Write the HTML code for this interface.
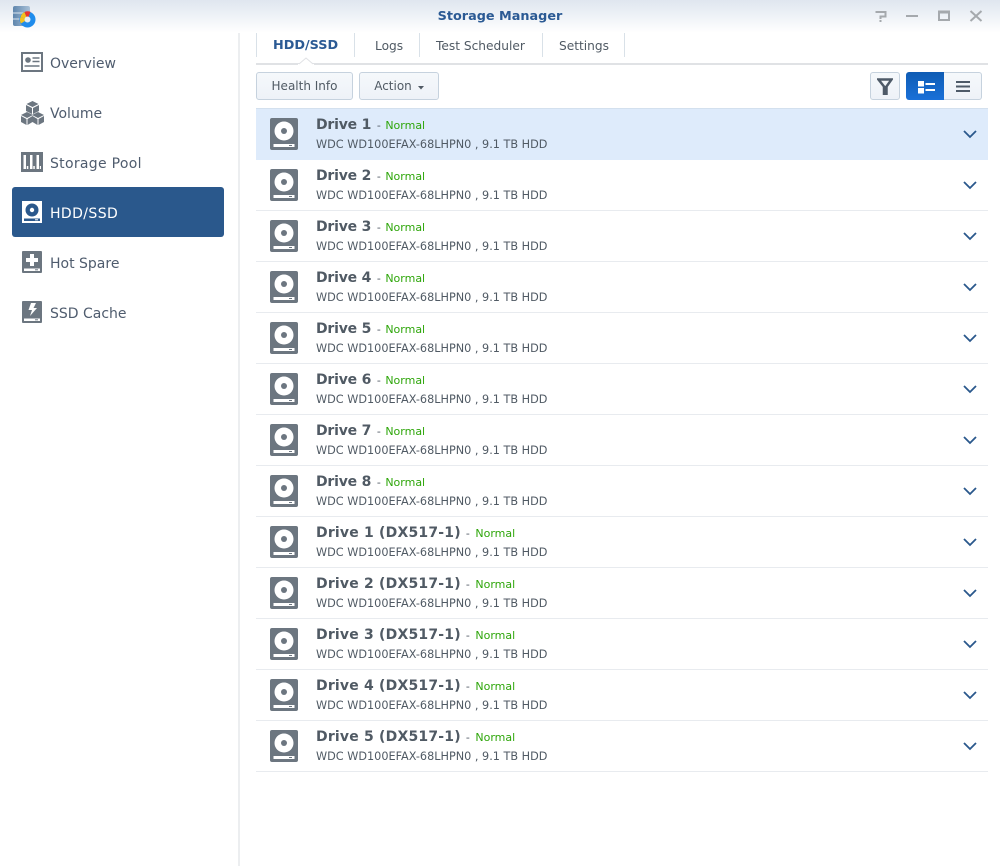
<!DOCTYPE html>
<html><head><meta charset="utf-8"><style>
html,body{margin:0;padding:0}
body{width:1000px;height:866px;position:relative;overflow:hidden;background:#fff;font-family:"DejaVu Sans","Liberation Sans",sans-serif;color:#505a64}
.a{position:absolute;white-space:nowrap}
.top{left:0;top:0;width:1000px;height:33px;background:linear-gradient(#dfe6ef,#fff)}
.side{left:238px;top:33px;width:2px;height:833px;background:#eceef0}
.nav{left:50px;font-size:14px;line-height:20px;color:#4f5c6e}
.sel{left:12px;top:187px;width:212px;height:50px;background:#2a588c;border-radius:3px}
.tab{top:33px;height:24px;width:1px;background:#d9e1e8}
.tt{top:37px;font-size:12.2px;line-height:18px;color:#505a64}
.btn{box-sizing:border-box;top:72px;height:28px;border:1px solid #c6d2de;border-radius:3px;background:linear-gradient(#f5f8fb,#eef2f8);font-size:12px;line-height:27px;color:#505a64;text-align:center}
.row{left:256px;width:732px;height:51px;box-sizing:border-box;border-bottom:1px solid #e8ebef}
.row svg{position:absolute}
.ic{left:14px;top:9px}
.ch{left:707px;top:21px}
.n{position:absolute;left:60px;top:6px;font-size:14px;line-height:20px;font-weight:bold;color:#505a64;white-space:nowrap;letter-spacing:-.2px}
.l{letter-spacing:.2px}
.n span{font-weight:normal;font-size:11px;color:#505a64;letter-spacing:0;margin-left:1px;margin-right:1px}
.n.l span{margin-left:0;margin-right:2px}
.n b{font-weight:normal;font-size:11px;color:#2ea60a;letter-spacing:0}
.d{position:absolute;left:60px;top:27px;font-size:11.25px;line-height:17px;color:#505a64;white-space:nowrap}
</style></head><body>
<div class="a top"></div>
<div class="a side"></div>

<svg class="a" style="left:12px;top:5px" width="26" height="24" viewBox="0 0 26 24"><defs><linearGradient id="lg" x1="0" x2="1" y1="0" y2="0"><stop offset="0" stop-color="#5f86ad"/><stop offset="1" stop-color="#a9c1d8"/></linearGradient></defs><rect x="1" y="1" width="17" height="20" rx="2" fill="url(#lg)"/><path d="M1 8h17M1 14h17" stroke="#dce6ef" stroke-width="1"/><circle cx="15.500" cy="14.500" r="8" fill="#1f8cec"/><path d="M15.500 14.500L8.500 12a8 8 0 0 1 4-5z" fill="#f3c01d"/><path d="M15.500 14.500L12.500 7a8 8 0 0 1 6-.2z" fill="#e8352e"/><path d="M15.500 14.500L8.500 12a8 8 0 0 0 .4 6.500z" fill="#f3c01d"/><circle cx="15.500" cy="14.500" r="3" fill="#e4edf5"/></svg>
<div class="a" style="left:300px;width:400px;top:9px;text-align:center;font-size:12.800px;line-height:16px;font-weight:bold;color:#2b5a94">Storage Manager</div>
<svg class="a" style="left:870px;top:8px" width="115" height="16" viewBox="0 0 115 16" fill="none" stroke="#a5a9ad"><path d="M5.500 4h10v4.500h-5V11M10.500 12v2" stroke-width="2"/><path d="M36 8h12" stroke-width="2"/><rect x="69" y="4" width="10" height="8" stroke-width="2"/><path d="M68 4h12" stroke-width="3"/><path d="M100.500 3l11 10M111.500 3l-11 10" stroke-width="2"/></svg>

<svg class="a" style="left:21px;top:52px" width="22" height="20" viewBox="0 0 22 20"><rect width="22" height="20" fill="#6c7680"/><rect x="2" y="2" width="18" height="16" fill="#fff"/><circle cx="7" cy="8" r="2.800" fill="#6c7680"/><path d="M11.500 6h7M11.500 9.500h7M3.500 14h15" stroke="#6c7680" stroke-width="1.500"/></svg>
<div class="a nav" style="top:54px">Overview</div>
<svg class="a" style="left:21px;top:101px" width="23" height="24" viewBox="0 0 23 24" fill="#6c7680"><path d="M11.500 0l6 3-6 3-6-3z"/><path d="M5 4l6 3v6l-6-3zM18 4l-6 3v6l6-3z"/><path d="M6 11l6 3-6 3-6-3z"/><path d="M0 15l5.500 3v6L0 21zM11.500 15L6.500 18v6l5-3z"/><path d="M17 11l6 3-6 3-6-3z"/><path d="M11.500 15l5 3v6l-5-3zM23 15l-5.500 3v6l5.500-3z"/></svg>
<div class="a nav" style="top:104px">Volume</div>
<svg class="a" style="left:21px;top:152px" width="22" height="20" viewBox="0 0 22 20"><rect width="22" height="20" fill="#6c7680"/><path d="M2.500 3h2.500v14H2.500zM9 3h2.500v14H9zM15.500 3h2.500v14h-2.500z" fill="#fff"/><path d="M5.800 14h1.500v3H5.800zM12.300 14h1.500v3h-1.500zM18.800 14h1.200v3h-1.200z" fill="#fff"/></svg>
<div class="a nav" style="top:154px;letter-spacing:.3px">Storage Pool</div>
<div class="a sel"></div>
<svg class="a" style="left:22px;top:201px" width="20" height="22" viewBox="0 0 20 22"><rect width="20" height="22" fill="#fff"/><circle cx="10" cy="9" r="6.500" fill="#2a588c"/><circle cx="10" cy="9" r="2.200" fill="#fff"/><rect x="2" y="17.500" width="16" height="2.500" fill="#2a588c"/><rect x="13" y="18.300" width="3" height="1" fill="#fff"/></svg>
<div class="a nav" style="top:204px;color:#fff;letter-spacing:.4px">HDD/SSD</div>
<svg class="a" style="left:22px;top:251px" width="20" height="22" viewBox="0 0 20 22"><rect width="20" height="22" rx="1" fill="#6c7680"/><path d="M8 3h4v4h4v4h-4v4H8v-4H4V7h4z" fill="#fff"/><rect x="2" y="17.500" width="16" height="2.500" fill="#fff"/><rect x="13" y="18.300" width="3" height="1" fill="#6c7680"/></svg>
<div class="a nav" style="top:254px">Hot Spare</div>
<svg class="a" style="left:22px;top:301px" width="20" height="22" viewBox="0 0 20 22"><rect width="20" height="22" rx="1" fill="#6c7680"/><path d="M9 2h5l-2.500 5H15l-7 8 2-6H6.500z" fill="#fff"/><rect x="2" y="17.500" width="16" height="2.500" fill="#fff"/><rect x="13" y="18.300" width="3" height="1" fill="#6c7680"/></svg>
<div class="a nav" style="top:304px">SSD Cache</div>

<div class="a tab" style="left:256px"></div><div class="a tab" style="left:354px"></div><div class="a tab" style="left:419px"></div><div class="a tab" style="left:542px"></div><div class="a tab" style="left:624px"></div>
<div class="a tt" style="left:273px;font-weight:bold;color:#2b5a94;font-size:12.800px">HDD/SSD</div>
<div class="a tt" style="left:375px">Logs</div>
<div class="a tt" style="left:436px">Test Scheduler</div>
<div class="a tt" style="left:559px">Settings</div>
<div class="a" style="left:256px;top:63px;width:732px;height:2px;background:#e0e2e5"></div>
<svg class="a" style="left:298px;top:57px" width="16" height="8" viewBox="0 0 16 8"><path d="M0 7h1l7-6 7 6h1v1H0z" fill="#fff"/><path d="M1 7l7-6 7 6" fill="none" stroke="#e0e2e5"/></svg>

<div class="a btn" style="left:256px;width:97px">Health Info</div>
<div class="a btn" style="left:359px;width:80px;padding-right:12px">Action</div>
<svg class="a" style="left:417px;top:86px" width="8" height="4"><path d="M1 0h6L4 3.500z" fill="#505a64"/></svg>
<div class="a btn" style="left:870px;width:30px"></div>
<svg class="a" style="left:877px;top:78px" width="16" height="17" viewBox="0 0 16 17"><path d="M1.500 1.500h13L9.500 8.500V16H7V8.500z" fill="none" stroke="#4e5a68" stroke-width="2.500"/><path d="M7 9h2.500v7H7z" fill="#4e5a68"/></svg>
<div class="a" style="left:906px;top:72px;width:38px;height:28px;background:linear-gradient(#0f5cb4,#1a70d8);border-radius:3px 0 0 3px"></div>
<svg class="a" style="left:917px;top:80px" width="18" height="14"><path d="M1 1h6v5.500H1zM1 8h6v5.500H1zM8.500 3H18v2H8.500zM8.500 9H18v2H8.500z" fill="#fff"/></svg>
<div class="a btn" style="left:944px;width:38px;border-left:0;border-radius:0 3px 3px 0"></div>
<svg class="a" style="left:956px;top:81px" width="14" height="11"><path d="M0 0h14v2H0zM0 4.500h14v2H0zM0 9h14v2H0z" fill="#4e5a68"/></svg>

<div class="a" style="left:256px;top:108px;width:732px;height:1px;background:#d3e0ee"></div>

<div class="a row" style="top:109px;background:#deebfb;border-bottom:0"><svg class="ic" width="28" height="32" viewBox="0 0 28 32"><rect width="28" height="32" rx="2" fill="#6c7680"/><circle cx="14" cy="13" r="9.500" fill="#fff"/><circle cx="14" cy="13" r="3" fill="#6c7680"/><rect x="3.500" y="26" width="21" height="3" fill="#fff"/><rect x="19" y="27" width="3" height="1" fill="#6c7680"/></svg><div class="n">Drive 1 <span>- </span><b>Normal</b></div><div class="d">WDC WD100EFAX-68LHPN0 , 9.1 TB HDD</div><svg class="ch" width="14" height="9"><path d="M1 1l6 6 6-6" fill="none" stroke="#2a588c" stroke-width="1.800"/></svg></div>
<div class="a row" style="top:160px"><svg class="ic" width="28" height="32" viewBox="0 0 28 32"><rect width="28" height="32" rx="2" fill="#6c7680"/><circle cx="14" cy="13" r="9.500" fill="#fff"/><circle cx="14" cy="13" r="3" fill="#6c7680"/><rect x="3.500" y="26" width="21" height="3" fill="#fff"/><rect x="19" y="27" width="3" height="1" fill="#6c7680"/></svg><div class="n">Drive 2 <span>- </span><b>Normal</b></div><div class="d">WDC WD100EFAX-68LHPN0 , 9.1 TB HDD</div><svg class="ch" width="14" height="9"><path d="M1 1l6 6 6-6" fill="none" stroke="#2a588c" stroke-width="1.800"/></svg></div>
<div class="a row" style="top:211px"><svg class="ic" width="28" height="32" viewBox="0 0 28 32"><rect width="28" height="32" rx="2" fill="#6c7680"/><circle cx="14" cy="13" r="9.500" fill="#fff"/><circle cx="14" cy="13" r="3" fill="#6c7680"/><rect x="3.500" y="26" width="21" height="3" fill="#fff"/><rect x="19" y="27" width="3" height="1" fill="#6c7680"/></svg><div class="n">Drive 3 <span>- </span><b>Normal</b></div><div class="d">WDC WD100EFAX-68LHPN0 , 9.1 TB HDD</div><svg class="ch" width="14" height="9"><path d="M1 1l6 6 6-6" fill="none" stroke="#2a588c" stroke-width="1.800"/></svg></div>
<div class="a row" style="top:262px"><svg class="ic" width="28" height="32" viewBox="0 0 28 32"><rect width="28" height="32" rx="2" fill="#6c7680"/><circle cx="14" cy="13" r="9.500" fill="#fff"/><circle cx="14" cy="13" r="3" fill="#6c7680"/><rect x="3.500" y="26" width="21" height="3" fill="#fff"/><rect x="19" y="27" width="3" height="1" fill="#6c7680"/></svg><div class="n">Drive 4 <span>- </span><b>Normal</b></div><div class="d">WDC WD100EFAX-68LHPN0 , 9.1 TB HDD</div><svg class="ch" width="14" height="9"><path d="M1 1l6 6 6-6" fill="none" stroke="#2a588c" stroke-width="1.800"/></svg></div>
<div class="a row" style="top:313px"><svg class="ic" width="28" height="32" viewBox="0 0 28 32"><rect width="28" height="32" rx="2" fill="#6c7680"/><circle cx="14" cy="13" r="9.500" fill="#fff"/><circle cx="14" cy="13" r="3" fill="#6c7680"/><rect x="3.500" y="26" width="21" height="3" fill="#fff"/><rect x="19" y="27" width="3" height="1" fill="#6c7680"/></svg><div class="n">Drive 5 <span>- </span><b>Normal</b></div><div class="d">WDC WD100EFAX-68LHPN0 , 9.1 TB HDD</div><svg class="ch" width="14" height="9"><path d="M1 1l6 6 6-6" fill="none" stroke="#2a588c" stroke-width="1.800"/></svg></div>
<div class="a row" style="top:364px"><svg class="ic" width="28" height="32" viewBox="0 0 28 32"><rect width="28" height="32" rx="2" fill="#6c7680"/><circle cx="14" cy="13" r="9.500" fill="#fff"/><circle cx="14" cy="13" r="3" fill="#6c7680"/><rect x="3.500" y="26" width="21" height="3" fill="#fff"/><rect x="19" y="27" width="3" height="1" fill="#6c7680"/></svg><div class="n">Drive 6 <span>- </span><b>Normal</b></div><div class="d">WDC WD100EFAX-68LHPN0 , 9.1 TB HDD</div><svg class="ch" width="14" height="9"><path d="M1 1l6 6 6-6" fill="none" stroke="#2a588c" stroke-width="1.800"/></svg></div>
<div class="a row" style="top:415px"><svg class="ic" width="28" height="32" viewBox="0 0 28 32"><rect width="28" height="32" rx="2" fill="#6c7680"/><circle cx="14" cy="13" r="9.500" fill="#fff"/><circle cx="14" cy="13" r="3" fill="#6c7680"/><rect x="3.500" y="26" width="21" height="3" fill="#fff"/><rect x="19" y="27" width="3" height="1" fill="#6c7680"/></svg><div class="n">Drive 7 <span>- </span><b>Normal</b></div><div class="d">WDC WD100EFAX-68LHPN0 , 9.1 TB HDD</div><svg class="ch" width="14" height="9"><path d="M1 1l6 6 6-6" fill="none" stroke="#2a588c" stroke-width="1.800"/></svg></div>
<div class="a row" style="top:466px"><svg class="ic" width="28" height="32" viewBox="0 0 28 32"><rect width="28" height="32" rx="2" fill="#6c7680"/><circle cx="14" cy="13" r="9.500" fill="#fff"/><circle cx="14" cy="13" r="3" fill="#6c7680"/><rect x="3.500" y="26" width="21" height="3" fill="#fff"/><rect x="19" y="27" width="3" height="1" fill="#6c7680"/></svg><div class="n">Drive 8 <span>- </span><b>Normal</b></div><div class="d">WDC WD100EFAX-68LHPN0 , 9.1 TB HDD</div><svg class="ch" width="14" height="9"><path d="M1 1l6 6 6-6" fill="none" stroke="#2a588c" stroke-width="1.800"/></svg></div>
<div class="a row" style="top:517px"><svg class="ic" width="28" height="32" viewBox="0 0 28 32"><rect width="28" height="32" rx="2" fill="#6c7680"/><circle cx="14" cy="13" r="9.500" fill="#fff"/><circle cx="14" cy="13" r="3" fill="#6c7680"/><rect x="3.500" y="26" width="21" height="3" fill="#fff"/><rect x="19" y="27" width="3" height="1" fill="#6c7680"/></svg><div class="n l">Drive 1 (DX517-1) <span>- </span><b>Normal</b></div><div class="d">WDC WD100EFAX-68LHPN0 , 9.1 TB HDD</div><svg class="ch" width="14" height="9"><path d="M1 1l6 6 6-6" fill="none" stroke="#2a588c" stroke-width="1.800"/></svg></div>
<div class="a row" style="top:568px"><svg class="ic" width="28" height="32" viewBox="0 0 28 32"><rect width="28" height="32" rx="2" fill="#6c7680"/><circle cx="14" cy="13" r="9.500" fill="#fff"/><circle cx="14" cy="13" r="3" fill="#6c7680"/><rect x="3.500" y="26" width="21" height="3" fill="#fff"/><rect x="19" y="27" width="3" height="1" fill="#6c7680"/></svg><div class="n l">Drive 2 (DX517-1) <span>- </span><b>Normal</b></div><div class="d">WDC WD100EFAX-68LHPN0 , 9.1 TB HDD</div><svg class="ch" width="14" height="9"><path d="M1 1l6 6 6-6" fill="none" stroke="#2a588c" stroke-width="1.800"/></svg></div>
<div class="a row" style="top:619px"><svg class="ic" width="28" height="32" viewBox="0 0 28 32"><rect width="28" height="32" rx="2" fill="#6c7680"/><circle cx="14" cy="13" r="9.500" fill="#fff"/><circle cx="14" cy="13" r="3" fill="#6c7680"/><rect x="3.500" y="26" width="21" height="3" fill="#fff"/><rect x="19" y="27" width="3" height="1" fill="#6c7680"/></svg><div class="n l">Drive 3 (DX517-1) <span>- </span><b>Normal</b></div><div class="d">WDC WD100EFAX-68LHPN0 , 9.1 TB HDD</div><svg class="ch" width="14" height="9"><path d="M1 1l6 6 6-6" fill="none" stroke="#2a588c" stroke-width="1.800"/></svg></div>
<div class="a row" style="top:670px"><svg class="ic" width="28" height="32" viewBox="0 0 28 32"><rect width="28" height="32" rx="2" fill="#6c7680"/><circle cx="14" cy="13" r="9.500" fill="#fff"/><circle cx="14" cy="13" r="3" fill="#6c7680"/><rect x="3.500" y="26" width="21" height="3" fill="#fff"/><rect x="19" y="27" width="3" height="1" fill="#6c7680"/></svg><div class="n l">Drive 4 (DX517-1) <span>- </span><b>Normal</b></div><div class="d">WDC WD100EFAX-68LHPN0 , 9.1 TB HDD</div><svg class="ch" width="14" height="9"><path d="M1 1l6 6 6-6" fill="none" stroke="#2a588c" stroke-width="1.800"/></svg></div>
<div class="a row" style="top:721px"><svg class="ic" width="28" height="32" viewBox="0 0 28 32"><rect width="28" height="32" rx="2" fill="#6c7680"/><circle cx="14" cy="13" r="9.500" fill="#fff"/><circle cx="14" cy="13" r="3" fill="#6c7680"/><rect x="3.500" y="26" width="21" height="3" fill="#fff"/><rect x="19" y="27" width="3" height="1" fill="#6c7680"/></svg><div class="n l">Drive 5 (DX517-1) <span>- </span><b>Normal</b></div><div class="d">WDC WD100EFAX-68LHPN0 , 9.1 TB HDD</div><svg class="ch" width="14" height="9"><path d="M1 1l6 6 6-6" fill="none" stroke="#2a588c" stroke-width="1.800"/></svg></div>
</body></html>
